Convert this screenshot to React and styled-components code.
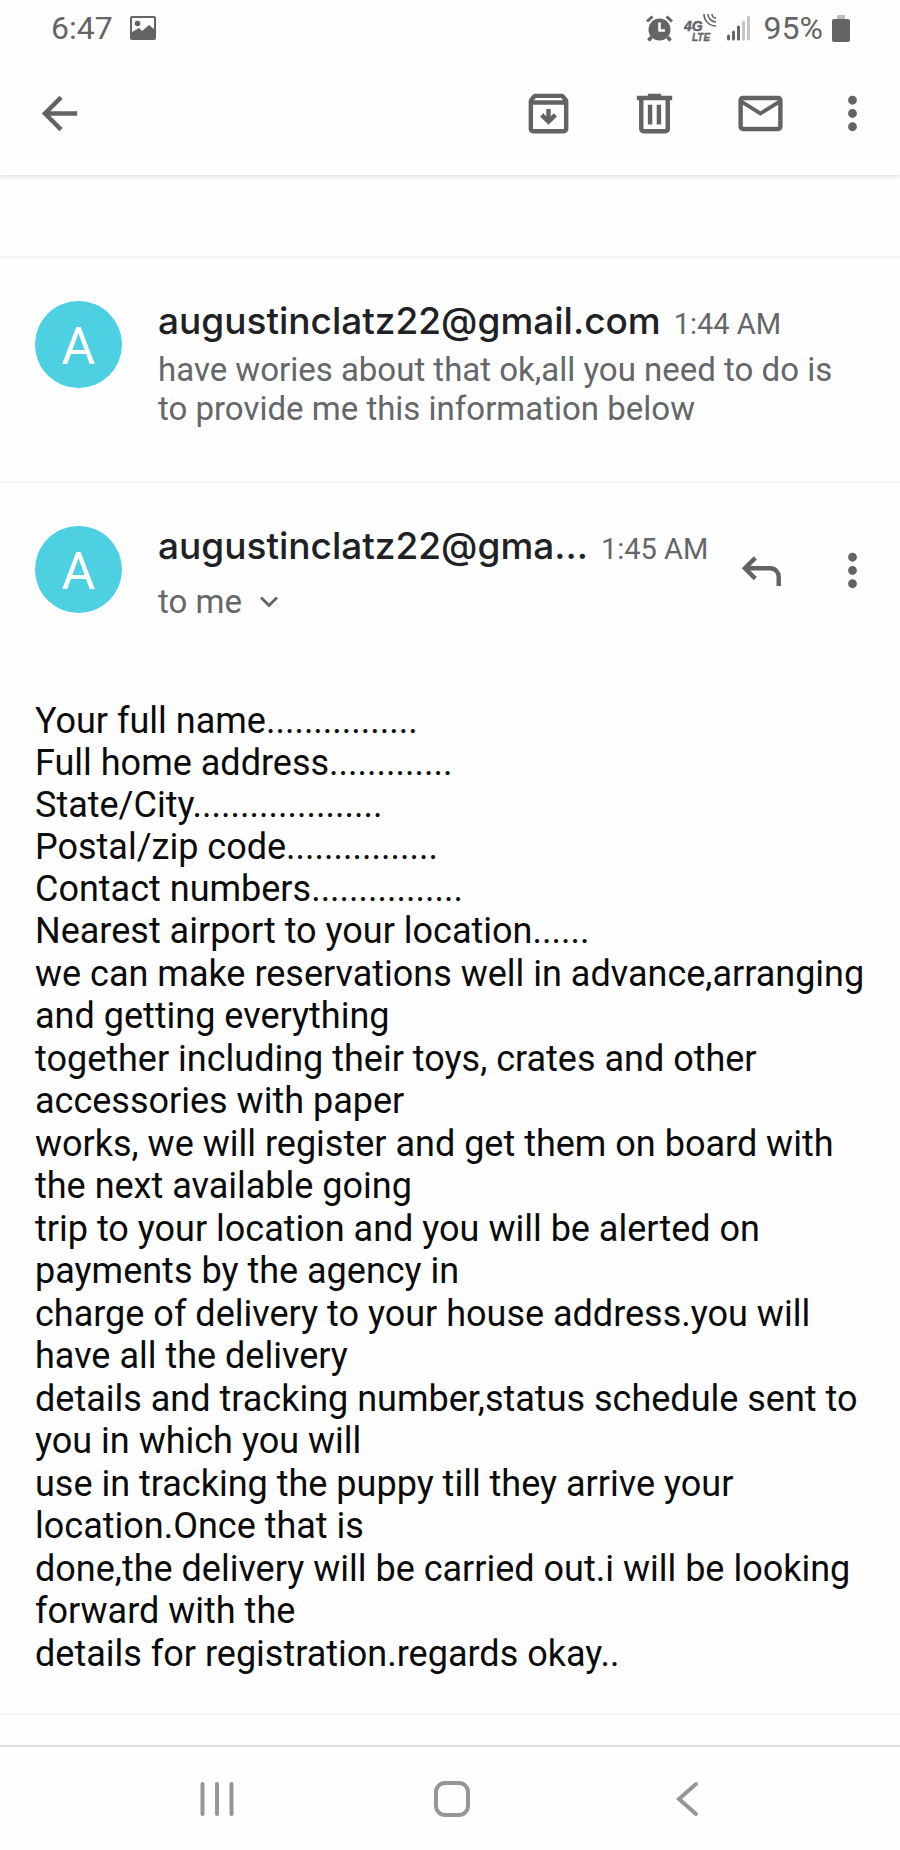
import styled, { createGlobalStyle } from "styled-components"
import { MdArrowBack, MdMoreVert, MdOutlineMail } from "react-icons/md"

const fields = [
    "Your full name................",
    "Full home address.............",
    "State/City....................",
    "Postal/zip code................",
    "Contact numbers................",
    "Nearest airport to your location......",
]

const paragraphs = [
    "we can make reservations well in advance,arranging and getting everything",
    "together including their toys, crates and other accessories with paper",
    "works, we will register and get them on board with the next available going",
    "trip to your location and you will be alerted on payments by the agency in",
    "charge of delivery to your house address.you will have all the delivery",
    "details and tracking number,status schedule sent to you in which you will",
    "use in tracking the puppy till they arrive your location.Once that is",
    "done,the delivery will be carried out.i will be looking forward with the",
    "details for registration.regards okay..",
]

const PictureIcon = () => (
    <svg width="26" height="26" viewBox="0 0 26 26" fill="#646464">
        <path fillRule="evenodd" d="M2 1h22a2 2 0 0 1 2 2v20a2 2 0 0 1-2 2H2a2 2 0 0 1-2-2V3a2 2 0 0 1 2-2zM2 3v14l7-4 3 3 7-6 5 4V3z" />
        <circle cx="7.500" cy="8.500" r="2.800" />
    </svg>
)

const AlarmIcon = () => (
    <svg width="27" height="27" viewBox="0 0 27 27" fill="none" stroke="#646464">
        <circle cx="13.500" cy="14.500" r="11" fill="#646464" stroke="none" />
        <path d="M1 6.500L6.500 1.500M26 6.500L20.500 1.500" strokeWidth="3" />
        <path d="M5.500 22L2.500 25.500M21.500 22l3 3.500" strokeWidth="3.500" />
        <path d="M13.500 7.500v8h5.500" stroke="#fff" strokeWidth="2.500" />
    </svg>
)

const NetworkIcon = () => (
    <svg width="32" height="28" viewBox="0 0 32 28">
        <g fill="#646464" fontFamily="Liberation Sans, sans-serif" fontWeight="bold" fontStyle="italic">
            <text x="0" y="17" fontSize="14" stroke="#646464" strokeWidth="0.500">4G</text>
            <text x="8" y="27" fontSize="10" stroke="#646464" strokeWidth="0.300">LTE</text>
        </g>
        <path d="M20 0a12 12 0 0 0 12 12M24 0a8 8 0 0 0 8 8M28 0a4 4 0 0 0 4 4" fill="none" stroke="#646464" strokeWidth="1.600" />
    </svg>
)

const SignalIcon = () => (
    <svg width="23" height="26" viewBox="0 0 23 26" strokeWidth="3" strokeLinecap="round">
        <path d="M1.500 21v3M6.500 17v7M11.500 12v12" stroke="#646464" />
        <path d="M16.500 7v17M21.500 2v22" stroke="#c6c6c6" />
    </svg>
)

const BatteryIcon = () => (
    <svg width="18" height="27" viewBox="0 0 18 27">
        <rect x="5" y="0" width="8" height="5" rx="1" fill="#bdbdbd" />
        <rect x="0" y="4" width="18" height="23" rx="2" fill="#646464" />
    </svg>
)

const ArchiveIcon = () => (
    <svg viewBox="0 0 24 24">
        <path fill="currentColor" d="M20.540 5.230l-1.390-1.680C18.880 3.210 18.470 3 18 3H6c-.470 0-.880.210-1.160.550L3.460 5.230C3.170 5.570 3 6.020 3 6.500V19c0 1.100.900 2 2 2h14c1.100 0 2-.900 2-2V6.500c0-.480-.170-.930-.460-1.270zM6.240 5h11.520l.830 1H5.420l.820-1zM5 19V8h14v11H5z" />
        <path fill="none" stroke="currentColor" strokeWidth="2" d="M12 10v5.500M8.900 12.600l3.100 3.100 3.100-3.100" />
    </svg>
)

const TrashIcon = () => (
    <svg viewBox="0 0 24 24">
        <path fill="currentColor" d="M9 3h6v1h5v2H4V4h5zM9 8h2v9H9zM13 8h2v9h-2z" />
        <path fill="none" stroke="currentColor" strokeWidth="2" d="M6 5v14a1 1 0 0 0 1 1h10a1 1 0 0 0 1-1V5" />
    </svg>
)

const ReplyIcon = () => (
    <svg viewBox="0 0 24 24" fill="none" stroke="currentColor" strokeWidth="2">
        <path d="M9.200 6.300L4.500 11l4.700 4.700M4.500 11H16a3.800 3.800 0 0 1 3.800 3.800V19" />
    </svg>
)

const ChevronIcon = () => (
    <svg width="20" height="12" viewBox="0 0 20 12" fill="none" stroke="currentColor" strokeWidth="3">
        <path d="M2 1.500l8 8 8-8" />
    </svg>
)

const App = () => {
    return (<>
    <GlobalStyle />
    <Page>
        <StatusBar>
            <Clock>6:47</Clock>
            <PictureIcon />
            <StatusGroup>
                <AlarmIcon />
                <NetworkIcon />
                <SignalIcon />
            </StatusGroup>
            <Charge>95%</Charge>
            <BatteryIcon />
        </StatusBar>
        <Toolbar>
            <IconButton aria-label="Back"><MdArrowBack /></IconButton>
            <Actions>
                <IconButton aria-label="Archive"><ArchiveIcon /></IconButton>
                <IconButton aria-label="Delete"><TrashIcon /></IconButton>
                <IconButton aria-label="Mark as unread"><MdOutlineMail /></IconButton>
            </Actions>
            <IconButton aria-label="More options"><MdMoreVert /></IconButton>
        </Toolbar>
        <Thread>
            <Message>
                <Header>
                    <Avatar>A</Avatar>
                    <Details>
                        <Line>
                            <Sender>augustinclatz22@gmail.com</Sender>
                            <Time>1:44 AM</Time>
                        </Line>
                        <Snippet>have wories about that ok,all you need to do is to provide me this information below</Snippet>
                    </Details>
                </Header>
            </Message>
            <Message>
                <Header>
                    <Avatar>A</Avatar>
                    <Details>
                        <Line>
                            <Sender>augustinclatz22@gma...</Sender>
                            <Time>1:45 AM</Time>
                        </Line>
                        <Recipient>to me <ChevronIcon /></Recipient>
                    </Details>
                    <MessageActions>
                        <IconButton aria-label="Reply"><ReplyIcon /></IconButton>
                        <IconButton aria-label="More message options"><MdMoreVert /></IconButton>
                    </MessageActions>
                </Header>
                <Body>
                    <div>
                    {
                        fields.map((field) => <Field key={field}>{field}</Field>)
                    }
                    </div>
                    {
                        paragraphs.map((text) => <Paragraph key={text}>{text}</Paragraph>)
                    }
                </Body>
            </Message>
            <Footer />
        </Thread>
        <NavBar>
            <NavButton aria-label="Recent apps">
                <svg width="36" height="36" viewBox="0 0 36 36"><path d="M3.500 3v30M18 3v30M32.500 3v30" /></svg>
            </NavButton>
            <NavButton aria-label="Home">
                <svg width="36" height="36" viewBox="0 0 36 36"><rect x="2" y="2" width="32" height="32" rx="9" /></svg>
            </NavButton>
            <NavButton aria-label="Go back">
                <svg width="36" height="36" viewBox="0 0 36 36"><path d="M27 3L10 18l17 15" /></svg>
            </NavButton>
        </NavBar>
    </Page>
    </>)
}

const GlobalStyle = createGlobalStyle`
* {
    box-sizing: border-box;
}
body {
    margin: 0;
    background: #fefefe;
    font-family: Roboto, "Liberation Sans", sans-serif;
}
`
const Page = styled.div`
display: flex;
flex-direction: column;
min-height: 100vh;
`
const StatusBar = styled.div`
display: flex;
align-items: center;
height: 52px;
padding: 4px 50px 0 51px;
font-size: 32px;
color: #646464;
`
const Clock = styled.span`
margin-right: 17px;
`
const StatusGroup = styled.div`
display: flex;
align-items: center;
gap: 11px;
margin-left: auto;
`
const Charge = styled.span`
margin: 0 9px 0 14px;
`
const Toolbar = styled.header`
display: flex;
align-items: center;
height: 123px;
padding: 0 21px 0 33px;
box-shadow: 0 1px 5px rgba(60, 64, 67, 0.2);
clip-path: inset(0 0 -8px 0);
`
const Actions = styled.div`
display: flex;
gap: 53px;
margin: 0 39px 0 auto;
`
const IconButton = styled.button`
display: flex;
width: 53px;
height: 53px;
padding: 0;
border: none;
background: none;
color: #616364;
cursor: pointer;
svg {
    width: 100%;
    height: 100%;
}
`
const Thread = styled.main`
flex: 1;
padding-top: 81px;
`
const Message = styled.article`
padding: 43px 35px 0;
border-top: 2px solid #f4f5f5;
`
const Header = styled.div`
display: flex;
min-height: 180px;
`
const Avatar = styled.div`
display: flex;
flex-shrink: 0;
align-items: center;
justify-content: center;
width: 87px;
height: 87px;
margin-right: 36px;
padding-top: 4px;
border-radius: 50%;
background: #4dd0e1;
color: #fff;
font-size: 52px;
`
const Details = styled.div`
flex: 1;
min-width: 0;
color: #646769;
`
const Line = styled.div`
display: flex;
align-items: baseline;
gap: 13px;
height: 44px;
line-height: 40px;
white-space: nowrap;
`
const Sender = styled.span`
font-family: Inter, Roboto, sans-serif;
font-size: 37px;
font-weight: 500;
color: #202124;
`
const Time = styled.span`
font-size: 29px;
`
const Snippet = styled.p`
margin: 5px 0 0;
font-size: 33px;
line-height: 39px;
`
const Recipient = styled.button`
display: flex;
align-items: center;
gap: 17px;
margin-top: 12px;
padding: 0;
border: none;
background: none;
color: inherit;
font-family: inherit;
font-size: 33px;
line-height: 39px;
`
const MessageActions = styled.div`
display: flex;
gap: 38px;
margin: 18px -14px 0 0;
`
const Body = styled.div`
display: flex;
flex-direction: column;
gap: 1px;
margin-top: -6px;
padding-bottom: 38px;
font-size: 36px;
line-height: 42px;
color: #0b0b0b;
`
const Field = styled.div`
white-space: nowrap;
`
const Paragraph = styled.p`
margin: 0;
`
const Footer = styled.div`
border-top: 2px solid #f4f5f5;
`
const NavBar = styled.nav`
display: grid;
grid-template-columns: repeat(3, 1fr);
height: 105px;
padding: 0 96px 0 100px;
border-top: 2px solid #dedede;
`
const NavButton = styled.button`
display: flex;
align-items: center;
justify-content: center;
border: none;
background: none;
svg {
    fill: none;
    stroke: #969696;
    stroke-width: 4;
    stroke-linecap: round;
}
`

export default App;
